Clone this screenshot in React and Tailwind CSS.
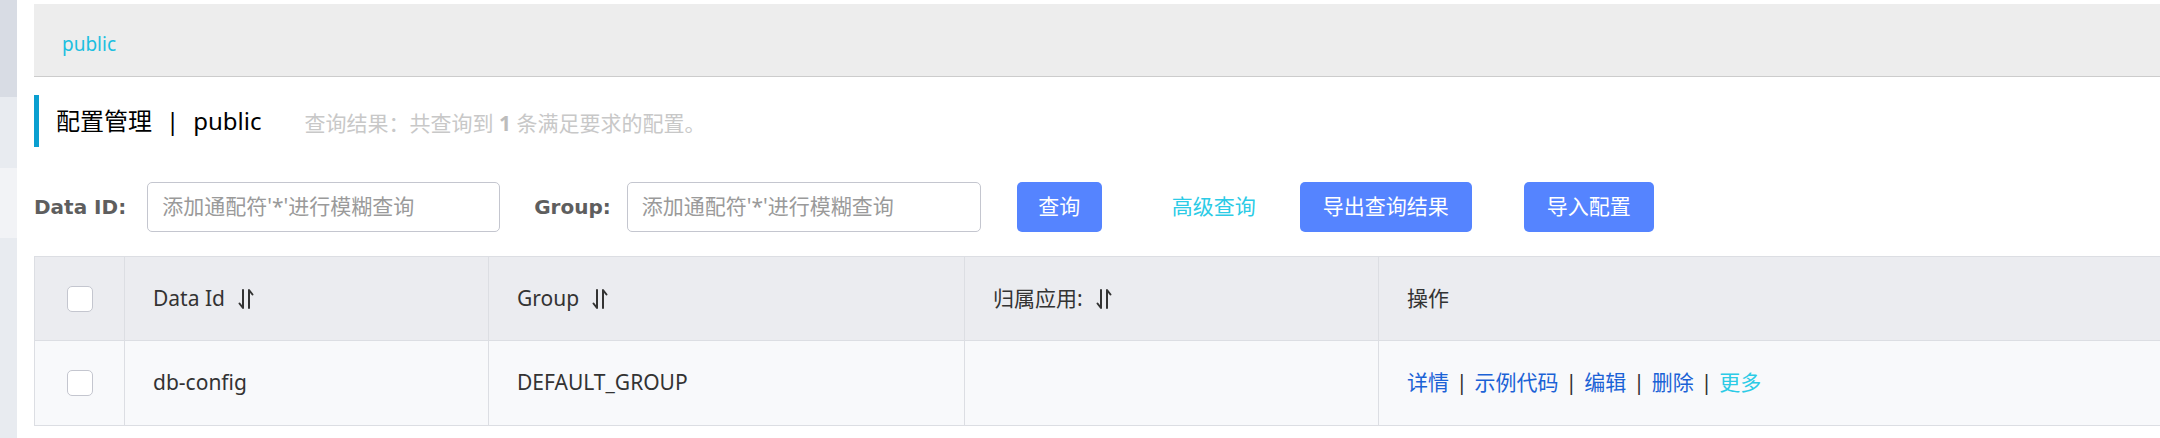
import React from "react";

const font = "font-['Noto_Sans','Noto_Sans_CJK_SC',sans-serif]";

function SortIcon() {
  return (
    <svg width="18" height="24" viewBox="0 0 18 24" className="ml-[12px] inline-block shrink-0" fill="none">
      <path d="M6 3 V21 L2.5 16.5" stroke="#333" strokeWidth="2" strokeLinecap="round" strokeLinejoin="round" />
      <path d="M12 21 V3 L15.5 7.5" stroke="#333" strokeWidth="2" strokeLinecap="round" strokeLinejoin="round" />
    </svg>
  );
}

function Checkbox() {
  return <span className="block h-[26px] w-[26px] rounded-[5px] border border-[#c4c6cf] bg-white" />;
}

const columns = [
  { label: "Data Id", w: "w-[364px]" },
  { label: "Group", w: "w-[476px]" },
  { label: "归属应用:", w: "w-[414px]" },
];

const actions = ["详情", "示例代码", "编辑", "删除"];

export default function App() {
  return (
    <div className={`flex h-[438px] w-[2160px] overflow-hidden bg-white ${font} text-[#333]`}>
      {/* sidebar remnant */}
      <div className="flex w-[17px] shrink-0 flex-col">
        <div className="h-[97px] bg-[#d8dce4]" />
        <div className="h-[71px] bg-[#e8ebf0]" />
        <div className="h-[70px] bg-[#f2f3f6]" />
        <div className="flex-1 bg-[#e8ebf0]" />
      </div>

      <div className="ml-[17px] w-[2200px] shrink-0 pt-[4px]">
        <div className="flex h-[73px] items-center border-b border-[#cccccc] bg-[#ededed] pl-[28px] pt-[9px]">
          <span className="text-[19px] text-[#1cbfe0]">public</span>
        </div>

        <div className="mt-[18px] flex h-[52px] items-center border-l-[5px] border-[#0a9fd0] pl-[17px]">
          <span className="text-[24px] text-black">配置管理</span>
          <span className="mx-[14px] text-[24px] text-black">|</span>
          <span className="text-[24px] text-black">public</span>
          <span className="ml-[43px] mt-[6px] text-[21px] text-[#c8c8c8]">
            查询结果：共查询到 <b className="font-bold text-[#bcbcbc]">1</b> 条满足要求的配置。
          </span>
        </div>

        <div className="mt-[35px] flex h-[50px] items-center">
          <span className="font-['DejaVu_Sans',sans-serif] text-[20px] font-bold text-[#5e5e5e]">Data ID:</span>
          <div className="ml-[21px] flex h-[50px] w-[353px] items-center rounded-[5px] border border-[#c4c6cf] px-[14px] text-[21px] text-[#9a9a9a]">
            添加通配符'*'进行模糊查询
          </div>
          <span className="ml-[34px] font-['DejaVu_Sans',sans-serif] text-[20px] font-bold text-[#5e5e5e]">Group:</span>
          <div className="ml-[16px] flex h-[50px] w-[354px] items-center rounded-[5px] border border-[#c4c6cf] px-[14px] text-[21px] text-[#9a9a9a]">
            添加通配符'*'进行模糊查询
          </div>
          <button className="ml-[36px] flex h-[50px] w-[85px] items-center justify-center rounded-[5px] bg-[#5584ff] text-[21px] text-white">
            查询
          </button>
          <span className="ml-[70px] text-[21px] text-[#2ccbe6]">高级查询</span>
          <button className="ml-[44px] flex h-[50px] w-[172px] items-center justify-center rounded-[5px] bg-[#5584ff] text-[21px] text-white">
            导出查询结果
          </button>
          <button className="ml-[52px] flex h-[50px] w-[130px] items-center justify-center rounded-[5px] bg-[#5584ff] text-[21px] text-white">
            导入配置
          </button>
        </div>

        <div className="mt-[24px] border border-[#dcdee3] text-[21px]">
          <div className="flex h-[83px] bg-[#ebecf0]">
            <div className="flex w-[90px] items-center justify-center border-r border-[#dcdee3]">
              <Checkbox />
            </div>
            {columns.map((c) => (
              <div key={c.label} className={`flex ${c.w} items-center border-r border-[#dcdee3] px-[28px]`}>
                <span>{c.label}</span>
                <SortIcon />
              </div>
            ))}
            <div className="flex flex-1 items-center px-[28px]">操作</div>
          </div>
          <div className="flex h-[85px] border-t border-[#dcdee3] bg-[#f8f9fb]">
            <div className="flex w-[90px] items-center justify-center border-r border-[#dcdee3]">
              <Checkbox />
            </div>
            <div className="flex w-[364px] items-center border-r border-[#dcdee3] px-[28px]">db-config</div>
            <div className="flex w-[476px] items-center border-r border-[#dcdee3] px-[28px]">DEFAULT_GROUP</div>
            <div className="w-[414px] border-r border-[#dcdee3]" />
            <div className="flex flex-1 items-center px-[28px]">
              {actions.map((a) => (
                <React.Fragment key={a}>
                  <span className="text-[#1b62d6]">{a}</span>
                  <span className="mx-[7px] text-[#333]">|</span>
                </React.Fragment>
              ))}
              <span className="text-[#2ccbe6]">更多</span>
            </div>
          </div>
        </div>
      </div>
    </div>
  );
}
